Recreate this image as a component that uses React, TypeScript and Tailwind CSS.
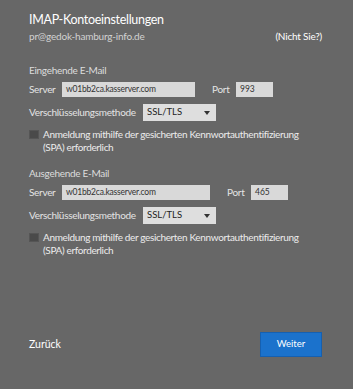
import React from 'react';

const font = { fontFamily: 'Lato, "Liberation Sans", sans-serif' };

const Select = () => (
    <div className="flex h-[17px] w-[73px] items-center justify-between bg-[#dedede] pl-[4px] pr-[6px] text-[9.5px] text-[#222]">
        <span>SSL/TLS</span>
        <svg width="6" height="4" viewBox="0 0 6 4"><path d="M0 0h6L3 4z" fill="#333" /></svg>
    </div>
);

const Checkbox = () => (
    <div className="flex items-start gap-[4px]">
        <div className="mt-[2px] h-[9px] w-[10px] shrink-0 border border-[#555] bg-[#4a4a4a]" />
        <p className="whitespace-nowrap text-[10px] leading-[13px] tracking-[-0.35px] text-[#ececec]">
            Anmeldung mithilfe der gesicherten Kennwortauthentifizierung<br />(SPA) erforderlich
        </p>
    </div>
);

const ServerBlock = ({ title, port, serverWidth }: { title: string; port: string; serverWidth: string }) => (
    <div className="flex flex-col">
        <p className="text-[10px] leading-[14px] tracking-[-0.3px] text-[#dcdcdc]">{title}</p>
        <div className="mt-[5px] flex items-center">
            <span className="w-[33px] whitespace-nowrap text-[10px] tracking-[-0.3px] text-[#e4e4e4]">Server</span>
            <div className={`flex h-[15px] items-center bg-[#d9d9d9] pl-[4px] text-[8.5px] tracking-[-0.2px] text-[#333] ${serverWidth}`}>w01bb2ca.kasserver.com</div>
            <span className="ml-[17px] w-[24px] whitespace-nowrap text-[10px] tracking-[-0.3px] text-[#e4e4e4]">Port</span>
            <div className="flex h-[15px] w-[37px] items-center bg-[#d9d9d9] pl-[4px] text-[8.5px] text-[#333]">{port}</div>
        </div>
        <div className="mt-[7px] flex items-center">
            <span className="w-[114px] whitespace-nowrap text-[10px] tracking-[-0.3px] text-[#e4e4e4]">Verschlüsselungsmethode</span>
            <Select />
        </div>
        <div className="mt-[7px]">
            <Checkbox />
        </div>
    </div>
);

export default function App() {
    return (
        <div className="flex h-[389px] w-[353px] flex-col bg-[#676767] pl-[29px] pr-[31px] pt-[12px]" style={font}>
            <h1 className="text-[12.5px] leading-[16px] tracking-[-0.3px] text-white">IMAP-Kontoeinstellungen</h1>
            <div className="mt-[1px] flex items-center justify-between text-[10px] leading-[14px] tracking-[-0.2px]">
                <span className="text-[#d2d2d2]">pr@gedok-hamburg-info.de</span>
                <span className="text-white">(Nicht Sie?)</span>
            </div>
            <div className="mt-[20px]">
                <ServerBlock title="Eingehende E-Mail" port="993" serverWidth="w-[133px]" />
            </div>
            <div className="mt-[12px]">
                <ServerBlock title="Ausgehende E-Mail" port="465" serverWidth="w-[148px]" />
            </div>
            <div className="mt-auto mb-[32px] flex items-center justify-between">
                <span className="text-[10.5px] text-white">Zurück</span>
                <button className="h-[25px] w-[62px] border border-[#1660b0] bg-[#1b72cc] text-[9.5px] text-white">Weiter</button>
            </div>
        </div>
    );
}
